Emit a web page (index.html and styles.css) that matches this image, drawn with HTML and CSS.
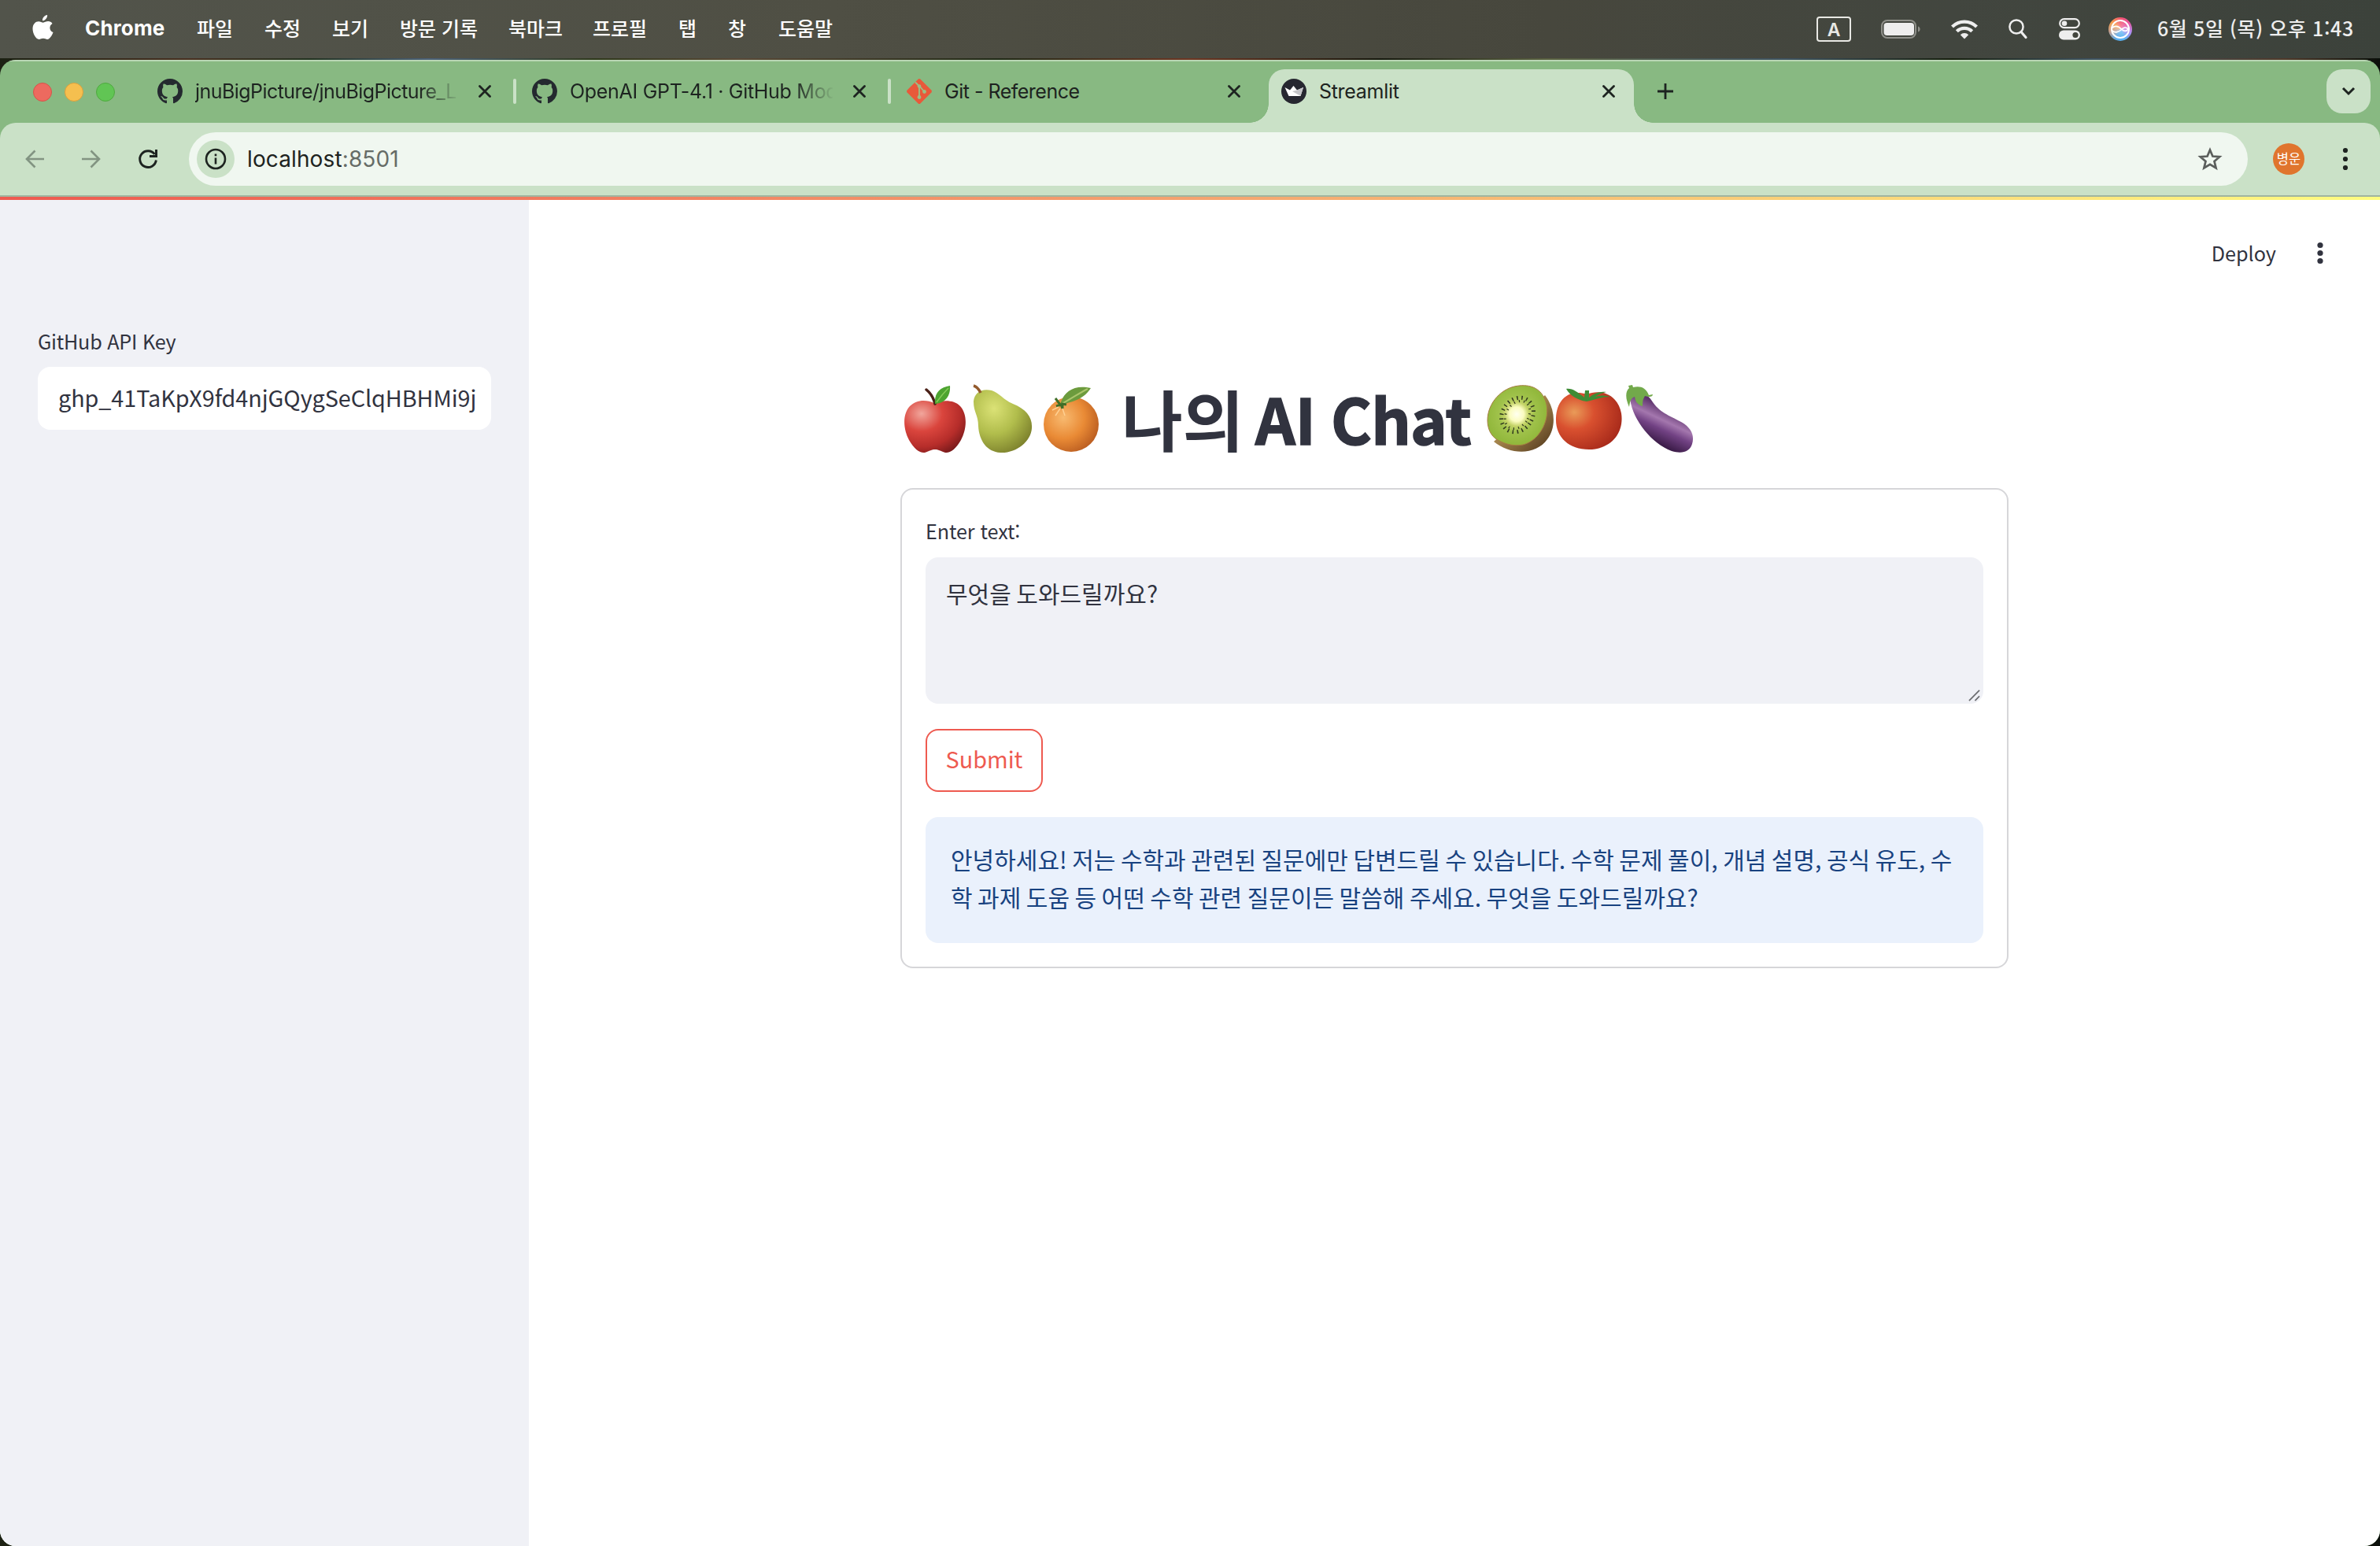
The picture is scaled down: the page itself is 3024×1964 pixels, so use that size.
FILE: index.html
```html
<!DOCTYPE html>
<html lang="ko">
<head>
<meta charset="utf-8">
<title>Streamlit</title>
<link rel="stylesheet" href="styles.css">
</head>
<body>
<svg class="defs" width="0" height="0" aria-hidden="true">
  <defs>
    <symbol id="github" viewBox="0 0 16 16"><path fill="#24292f" d="M8 0C3.58 0 0 3.58 0 8c0 3.54 2.29 6.53 5.47 7.59.4.07.55-.17.55-.38 0-.19-.01-.82-.01-1.49-2.01.37-2.53-.49-2.69-.94-.09-.23-.48-.94-.82-1.13-.28-.15-.68-.52-.01-.53.63-.01 1.08.58 1.23.82.72 1.21 1.87.87 2.33.66.07-.52.28-.87.51-1.07-1.78-.2-3.64-.89-3.64-3.95 0-.87.31-1.59.82-2.15-.08-.2-.36-1.02.08-2.12 0 0 .67-.21 2.2.82.64-.18 1.32-.27 2-.27s1.36.09 2 .27c1.53-1.04 2.2-.82 2.2-.82.44 1.1.16 1.92.08 2.12.51.56.82 1.27.82 2.15 0 3.07-1.87 3.75-3.65 3.95.29.25.54.73.54 1.48 0 1.07-.01 1.93-.01 2.2 0 .21.15.46.55.38A8.01 8.01 0 0 0 16 8c0-4.42-3.58-8-8-8z"/></symbol>
    <symbol id="close" viewBox="0 0 16 16"><path d="M1.500 1.500l13 13M14.500 1.500l-13 13" stroke="#1d2320" stroke-width="2.800" stroke-linecap="round" fill="none"/></symbol>
  </defs>
</svg>
<header class="menubar">
  <svg class="apple-logo" viewBox="0 0 26 32"><path fill="#fff" d="M18.6 0c.3 3.700-2.900 7.300-6.100 7.300C12 3.900 15.300.4 18.600 0zM25 10.900c-4.500 2.700-4 9.200 1 11.100-1.200 3.600-4.300 9-7.200 9-2.200 0-2.900-1.200-5.400-1.200S10 31 8 31C4.200 31 0 23.600 0 17.600 0 11.500 3.800 8.200 7.500 8.200c2.400 0 4.200 1.500 5.900 1.500 1.500 0 3.600-1.600 6.400-1.600 2 0 4 .9 5.200 2.800z"/></svg>
  <nav class="menus">
    <b>Chrome</b><span>파일</span><span>수정</span><span>보기</span><span>방문 기록</span><span>북마크</span><span>프로필</span><span>탭</span><span>창</span><span>도움말</span>
  </nav>
  <div class="status">
    <span class="input-source">A</span>
    <svg class="battery" viewBox="0 0 50 24"><rect x="1" y="1" width="43" height="22" rx="7" fill="none" stroke="#8f908a" stroke-width="2"/><rect x="3.500" y="4" width="38.500" height="16" rx="4" fill="#eee"/><path d="M47 8.500c3.500 1 3.500 6 0 7z" fill="#8f908a"/></svg>
    <svg class="wifi" viewBox="0 0 34 26"><g fill="none" stroke="#eee" stroke-width="4.200"><path d="M1.500 10a22 22 0 0 1 31 0"/><path d="M7.300 15.800a13.800 13.800 0 0 1 19.400 0"/></g><path d="M11.800 20.200a7.400 7.400 0 0 1 10.400 0L17 25.500z" fill="#eee"/></svg>
    <svg class="search" viewBox="0 0 24 26"><circle cx="10" cy="10" r="8.600" fill="none" stroke="#eee" stroke-width="2.500"/><path d="M16 16.500l6 7" stroke="#eee" stroke-width="3.200" stroke-linecap="round"/></svg>
    <svg class="control" viewBox="0 0 28 28"><rect x="1.200" y="1.200" width="24.600" height="11" rx="5.500" fill="none" stroke="#eee" stroke-width="2.200"/><circle cx="7" cy="6.700" r="3.300" fill="#eee"/><rect y="15.500" width="27" height="12" rx="6" fill="#eee"/><circle cx="21" cy="21.500" r="3.600" fill="#42453d"/></svg>
    <span class="siri"><svg viewBox="0 0 30 30"><circle cx="15" cy="15" r="11" fill="none" stroke="#fff" stroke-width="2"/><path d="M4.500 13.500c5-4 9-1.500 12 1.500s6 3.500 8.500 0c-2.500-3-5.500-2.500-8.500.5s-8 5-12 1.500" fill="none" stroke="#fff" stroke-width="1.700"/></svg></span>
    <time>6월 5일 (목) 오후 1:43</time>
  </div>
</header>
<main class="window">
  <div class="tabstrip">
    <div class="lights"><i class="red"></i><i class="yellow"></i><i class="green"></i></div>
    <div class="tab"><svg class="favicon"><use href="#github"/></svg><span class="tab-title fade t1">jnuBigPicture/jnuBigPicture_L</span><svg class="close"><use href="#close"/></svg></div>
    <div class="tab divided"><svg class="favicon"><use href="#github"/></svg><span class="tab-title fade t2">OpenAI GPT-4.1 · GitHub Mod</span><svg class="close"><use href="#close"/></svg></div>
    <div class="tab divided"><svg class="favicon" viewBox="0 0 32 32"><path d="M14.600.600q1.400-1.200 2.800 0l14 14q1.200 1.400 0 2.800l-14 14q-1.400 1.200-2.800 0l-14-14q-1.200-1.400 0-2.800z" fill="#e8593a"/><path d="M11 4.500l5 5v14M16 9l6 7" stroke="#9dbd84" stroke-width="1.900" fill="none"/><g fill="#9dbd84"><circle cx="16" cy="9.500" r="2.300"/><circle cx="16" cy="23.500" r="2.400"/><circle cx="22.500" cy="16.500" r="2.400"/></g></svg><span class="tab-title t3">Git - Reference</span><svg class="close"><use href="#close"/></svg></div>
    <div class="tab active"><svg class="favicon" viewBox="0 0 32 32"><circle cx="16" cy="16" r="16" fill="#262730"/><path d="M4.500 11l6.500 3.500L15.500 9l4.500 5.500 8-3.500-3.500 11h-15z" fill="#fff"/><path d="M14 16l6-1.500L28 11l-3.500 11z" fill="#c4c4c8"/></svg><span class="tab-title t4">Streamlit</span><svg class="close"><use href="#close"/></svg></div>
    <svg class="plus" viewBox="0 0 22 22"><path d="M11 1v20M1 11h20" stroke="#1d2320" stroke-width="2.800"/></svg>
    <div class="tab-search"><svg viewBox="0 0 18 12"><path d="M2 2l7 7 7-7" fill="none" stroke="#1d2320" stroke-width="3"/></svg></div>
  </div>
  <div class="toolbar">
    <svg class="nav" viewBox="0 0 24 24"><path d="M24 12H2M12.500 1.500L2 12l10.500 10.500" fill="none" stroke="#829482" stroke-width="2.600"/></svg>
    <svg class="nav" viewBox="0 0 24 24"><path d="M0 12h22M11.500 1.500L22 12 11.500 22.500" fill="none" stroke="#829482" stroke-width="2.600"/></svg>
    <svg class="nav" viewBox="0 0 24 24"><path d="M20.500 6A10.400 10.400 0 1 0 22.400 13.500" fill="none" stroke="#1d2320" stroke-width="2.900"/><path d="M24 0v10H14V7h7V0z" fill="#1d2320"/></svg>
    <div class="omnibox">
      <span class="info"><svg viewBox="0 0 28 28"><circle cx="14" cy="14" r="12" fill="none" stroke="#1d2320" stroke-width="2.600"/><path d="M14 12.500v8M14 7.500v2.800" stroke="#1d2320" stroke-width="2.600"/></svg></span>
      <span class="url">localhost<em>:8501</em></span>
      <svg class="star" viewBox="0 0 32 30"><path d="M16 3.500l3.400 8 8.800.7-6.700 5.700 2.100 8.500-7.600-4.600-7.600 4.600 2.100-8.500-6.700-5.700 8.800-.7z" fill="none" stroke="#5b5e5c" stroke-width="2.700"/></svg>
    </div>
    <span class="avatar">병운</span>
    <svg class="dots" viewBox="0 0 8 30"><g fill="#1d2320"><circle cx="4" cy="4" r="3.100"/><circle cx="4" cy="15" r="3.100"/><circle cx="4" cy="26" r="3.100"/></g></svg>
  </div>
  <div class="decoration"></div>
  <div class="app">
    <aside>
      <label class="label api">GitHub API Key</label>
      <div class="key">ghp_41TaKpX9fd4njGQygSeClqHBHMi9j</div>
    </aside>
    <section class="page">
      <div class="page-head"><span class="deploy">Deploy</span><svg class="dots" viewBox="0 0 8 30"><g fill="#31333f"><circle cx="4" cy="4.500" r="3.600"/><circle cx="4" cy="14.500" r="3.600"/><circle cx="4" cy="24.500" r="3.600"/></g></svg></div>
      <div class="block">
        <h1>
          <svg class="emoji" viewBox="0 0 88 88"><defs><radialGradient id="ap" cx=".28" cy=".25" r=".85"><stop offset="0" stop-color="#f1a69c"/><stop offset=".4" stop-color="#da453d"/><stop offset=".75" stop-color="#b62d2a"/><stop offset="1" stop-color="#7c1b1c"/></radialGradient></defs><path d="M43 24C32 19 20 20 12 28 2 39 4 58 11 71c6 11 14 17 20 16 6-2 9-4 13-4s7 2 13 4c6 1 14-5 20-16 7-13 9-32-1-43-8-8-21-8-33-4z" fill="url(#ap)"/><path d="M33 7c5 4 9 10 11 18" stroke="#4a2017" stroke-width="3.500" fill="none" stroke-linecap="round"/><path d="M44 25C43 11 50 4 63 2c1 12-5 22-19 23z" fill="#4da430"/><path d="M46 23C51 16 56 10 61 5" stroke="#86cc58" stroke-width="1.500" fill="none"/></svg>
          <svg class="emoji" viewBox="0 0 88 88"><defs><radialGradient id="pe" cx=".35" cy=".3" r=".8"><stop offset="0" stop-color="#dbe276"/><stop offset=".5" stop-color="#b1bd4c"/><stop offset="1" stop-color="#777b29"/></radialGradient></defs><path d="M5 22C6 10 16 5 28 8c11 4 15 12 27 17 17 7 25 17 24 31-1 17-20 32-40 31-17-1-27-15-28-34C11 39 5 36 5 22z" fill="url(#pe)"/><path d="M5 2c4 1 7 5 9 9" stroke="#935a2c" stroke-width="3.600" fill="none"/></svg>
          <svg class="emoji" viewBox="0 0 88 88"><defs><radialGradient id="or" cx=".36" cy=".38" r=".7"><stop offset="0" stop-color="#f8ba70"/><stop offset=".55" stop-color="#e98a35"/><stop offset="1" stop-color="#b95c20"/></radialGradient></defs><circle cx="41" cy="51" r="35" fill="url(#or)"/><path d="M27 26C31 10 44 0 66 5 58 17 48 22 27 26z" fill="#6c9b3d"/><path d="M29 25C42 18 52 11 62 6" stroke="#abc66c" stroke-width="2" fill="none"/><path d="M21 18l6 8M22 28l6-2 2 5 0-6 5 1" stroke="#3f6e28" stroke-width="3" fill="none"/><path d="M27 31l-6 9M30 31l3 9M25 29l-8 4" stroke="#ffd092" stroke-width="1.500"/></svg>
          <span class="ko">나의</span><span class="ai">AI</span><span class="chat">Chat</span>
          <svg class="emoji" viewBox="0 0 88 88"><defs><linearGradient id="kb" x1="0" y1="0" x2="1" y2="1"><stop offset=".4" stop-color="#aa8a50"/><stop offset="1" stop-color="#4d3319"/></linearGradient><radialGradient id="kg" cx=".49" cy=".48"><stop offset="0" stop-color="#fffff0"/><stop offset=".24" stop-color="#fbfcc0"/><stop offset=".4" stop-color="#c5d468"/><stop offset=".6" stop-color="#a0c24b"/><stop offset="1" stop-color="#92b83c"/></radialGradient></defs><path d="M75 14c14 18 14 42 3 56-14 20-46 21-68 3z" fill="url(#kb)"/><path d="M2 46C2 24 20 4 42 2c18-2 31 6 35 24 4 22-10 46-30 51-11 2-21 0-32-6C6 66 2 56 2 46z" fill="url(#kg)" stroke="#a67d42"/><ellipse cx="40" cy="39" rx="19" ry="23" transform="rotate(35 40 39)" fill="none" stroke="#31391f" stroke-width="5" stroke-dasharray="1.500 4.500"/><ellipse cx="40" cy="39" rx="14" ry="19" transform="rotate(35 40 39)" fill="none" stroke="#31391f" stroke-width="3" stroke-dasharray="1.200 5"/></svg>
          <svg class="emoji" viewBox="0 0 88 88"><defs><radialGradient id="to" cx=".28" cy=".35" r=".75"><stop offset="0" stop-color="#e99b58"/><stop offset=".4" stop-color="#d9502f"/><stop offset="1" stop-color="#a92b1b"/></radialGradient></defs><path d="M40 13C60 5 80 15 84 37c4 26-14 46-41 46C17 83 0 67 1 43 2 18 19 6 40 13z" fill="url(#to)"/><path d="M14 6c8-1 14 4 23 11l1-9h5v9c7-6 14-8 22-7-8 2-11 4-14 6 7-2 13-2 19 0-11 0-20 4-30 6-10-1-21-7-26-16z" fill="#3e8c35"/></svg>
          <svg class="emoji" viewBox="0 0 88 88"><defs><linearGradient id="eg" x1=".65" y1=".2" x2=".35" y2=".8"><stop offset=".1" stop-color="#5c316b"/><stop offset=".43" stop-color="#a477ae"/><stop offset=".65" stop-color="#724284"/><stop offset="1" stop-color="#3d1d4a"/></linearGradient></defs><path d="M7 18C14 8 26 9 34 20c11 17 22 19 38 28 14 8 17 18 14 28-3 10-13 13-26 9C34 75 10 45 7 18z" fill="url(#eg)"/><path d="M5 2l5-1 1 3c9-2 16 0 20 10l5-1c0 3-4 4-10 2-3 5-3 8-3 13-7-2-9-6-10-12-4 1-6 5-7 13-5-11-5-20 0-24z" fill="#72a94b"/></svg>
        </h1>
        <form class="card">
          <label class="label enter">Enter text:</label>
          <div class="textarea">무엇을 도와드릴까요?<svg class="grip" viewBox="0 0 16 16"><path d="M1 15L15 1M9 15l6-6" stroke="#6b6c70" stroke-width="1.800"/></svg></div>
          <div class="submit">Submit</div>
          <div class="answer"><span>안녕하세요! 저는 수학과 관련된 질문에만 답변드릴 수 있습니다. 수학 문제 풀이, 개념 설명, 공식 유도, 수</span><br><span>학 과제 도움 등 어떤 수학 관련 질문이든 말씀해 주세요. 무엇을 도와드릴까요?</span></div>
        </form>
      </div>
    </section>
  </div>
</main>
</body>
</html>
```
FILE: styles.css
```css
* { box-sizing: border-box; }
body {
  margin: 0; width: 3024px; height: 1964px; overflow: hidden;
  display: flex; flex-direction: column;
  font-family: "Noto Sans CJK KR", sans-serif; color: #31333f;
  background: linear-gradient(90deg, #1c2113, #4a3021 8%, #233321 13%, #4c6179 18%, #30391c 25%, #5b4937 31%, #222b18 42%, #6f3623 50%, #17190f 58%, #5a6040 65%, #3f5362 75%, #18200f 82%, #3f5362 88%, #51392a 96%, #0a0f0a);
}
svg { display: block; flex: none; overflow: visible; }
.defs { position: absolute; }

.menubar {
  height: 74px; flex: none; display: flex; align-items: center;
  padding: 0 33px 0 41px; color: #fff;
  background: linear-gradient(90deg, #52544b, #4f4f44 35%, #47473d 65%, #42463f 82%, #3c423b);
}
.apple-logo { width: 27px; height: 32px; margin-top: -5px; }
.menus {
  margin-left: 40px; display: grid; white-space: nowrap;
  grid-template-columns: 142px 86px 86px 86px 138px 107px 109px 63px 64px 70px;
  font-size: 25px; font-weight: 500; line-height: 36px; margin-top: -4px;
}
.menus b { font-family: Inter, sans-serif; font-size: 26px; font-weight: 700; letter-spacing: .15px; padding-top: 1px; }
.status { margin-left: auto; display: flex; align-items: center; }
.input-source {
  width: 44px; height: 32px; border: 2px solid #e8e8e4; border-radius: 4px; color: #e8e8e4;
  font: 600 23px/31px Inter, sans-serif; text-align: center;
}
.battery { width: 50px; height: 24px; margin-left: 38px; }
.wifi { width: 34px; height: 26px; margin-left: 39px; }
.search { width: 24px; height: 26px; margin-left: 39px; }
.control { width: 28px; height: 28px; margin-left: 40px; }
.siri {
  width: 30px; height: 30px; margin-left: 35px; border-radius: 50%;
  background: radial-gradient(circle, #fff6 0, #fff0 60%), conic-gradient(#f4566f, #e8539b, #b98af0, #58b4f2, #59a9ea, #c5a090, #f5a04c, #f4566f);
}
.menubar time { width: 250px; margin-left: 32px; margin-top: -4px; font-size: 25px; font-weight: 500; white-space: nowrap; color: #eee; letter-spacing: .6px; }

.window {
  margin-top: 2px; height: 1888px; display: flex; flex-direction: column; overflow: hidden;
  border-radius: 20px; background: #88b982;
}
.tabstrip { height: 80px; flex: none; display: flex; align-items: flex-start; box-shadow: inset 0 2px #b9d6b4; }
.lights { display: flex; gap: 16px; padding: 29px 0 0 42px; width: 184px; }
.lights i { width: 24px; height: 24px; border-radius: 50%; }
.red { background: #ed6a5f; border: 1px solid #d75349; }
.yellow { background: #f5bf4f; border: 1px solid #daa03d; }
.green { background: #61c554; border: 1px solid #4fa93f; }
.tab {
  position: relative; width: 476px; height: 68px; margin-top: 12px; padding: 0 20px 12px 16px;
  display: flex; align-items: center; font: 400 25px/32px Inter, sans-serif; color: #1d2320;
}
.tab.divided::before { content: ""; position: absolute; left: -8px; top: 12px; width: 4px; height: 32px; border-radius: 2px; background: #cae1c7; }
.tab.active { width: 464px; background: #cae1c7; border-radius: 20px 20px 0 0; padding-right: 24px; }
.tab.active::before, .tab.active::after { content: ""; position: absolute; bottom: 0; width: 24px; height: 24px; }
.tab.active::before { left: -24px; background: radial-gradient(circle at 0 0, transparent 23.500px, #cae1c7 24px); }
.tab.active::after { right: -24px; background: radial-gradient(circle at 100% 0, transparent 23.500px, #cae1c7 24px); }
.favicon { width: 32px; height: 32px; margin-right: 16px; }
.tab-title { width: 334px; height: 33px; overflow: hidden; white-space: nowrap; }
.t1 { letter-spacing: -.55px; }
.t2 { letter-spacing: -.3px; }
.t3 { letter-spacing: -.5px; }
.t4 { letter-spacing: -.3px; }
.fade { -webkit-mask-image: linear-gradient(90deg, #000 285px, transparent 336px); mask-image: linear-gradient(90deg, #000 285px, transparent 336px); }
.close { width: 16px; height: 16px; margin-left: 26px; }
.plus { width: 22px; height: 22px; margin: 29px 0 0 29px; }
.tab-search { margin: 12px 12px 0 auto; width: 56px; height: 56px; border-radius: 20px; background: #cae1c7; display: grid; place-items: center; }
.tab-search svg { width: 18px; height: 12px; }

.toolbar {
  height: 94px; flex: none; display: flex; align-items: center; padding: 0 40px 0 32px;
  background: #cae1c7; border-bottom: 2px solid #a0b59f; border-radius: 20px 20px 0 0;
}
.nav { width: 24px; height: 24px; margin-right: 48px; }
.omnibox { width: 2616px; height: 68px; margin-left: -8px; border-radius: 34px; background: #f0f7f0; display: flex; align-items: center; padding: 0 32px 0 10px; }
.info { width: 48px; height: 48px; border-radius: 50%; background: #cae1c7; display: grid; place-items: center; }
.info svg { width: 28px; height: 28px; }
.url { margin-left: 16px; font: 400 28px/40px Inter, sans-serif; letter-spacing: .12px; color: #1d2320; }
.url em { font-style: normal; color: #666c67; }
.star { width: 32px; height: 30px; margin-left: auto; }
.avatar { width: 40px; height: 40px; margin: 0 48px 0 32px; border-radius: 50%; background: #e0752d; color: #fff; font-size: 16.500px; line-height: 38px; text-align: center; }
.dots { width: 8px; height: 30px; }

.decoration { height: 4px; flex: none; background: linear-gradient(90deg, #ee5a50, #f4a36f 50%, #fffd80); }
.app { flex: 1; display: flex; background: #fff; }
aside { width: 672px; padding: 160px 48px 0; background: #f0f1f6; }
.label { display: block; height: 40px; font-size: 25.200px; line-height: 37px; }
.api { letter-spacing: -.25px; line-height: 38px; }
.enter { letter-spacing: -.1px; }
.key { margin-top: 12px; height: 80px; padding-left: 26px; border-radius: 16px; background: #fff; font-size: 28.800px; line-height: 78px; letter-spacing: -.08px; white-space: nowrap; }
.page { flex: 1; }
.page-head { height: 136px; display: flex; justify-content: flex-end; align-items: center; padding: 0 72px 0 0; font-size: 25.200px; line-height: 40px; }
.deploy { margin-right: 52px; padding-bottom: 3px; }
.block { width: 1408px; margin-left: 472px; }
h1 { margin: 0; height: 230px; padding-top: 98px; display: flex; font-weight: 700; font-size: 79.200px; line-height: 88px; white-space: nowrap; }
.emoji { width: 88px; height: 88px; }
.ko { width: 170px; margin-left: 17px; font-size: 84.500px; line-height: 84px; }
.ai, .chat { -webkit-text-stroke: 1.600px #31333f; line-height: 86px; }
.ai { width: 96px; }
.chat { width: 197px; letter-spacing: -.8px; }
.card { height: 610px; border: 2px solid #d6d6d9; border-radius: 16px; padding: 34px 30px 0; }
.textarea { position: relative; margin-top: 12px; height: 186px; border-radius: 16px; background: #f0f1f6; padding: 21px 26px; font-size: 30px; line-height: 48px; word-spacing: -1.900px; }
.grip { position: absolute; right: 4px; bottom: 3px; width: 15px; height: 15px; }
.submit { margin-top: 32px; width: 149px; height: 80px; border: 2px solid #ee5a50; border-radius: 16px; color: #ee5a50; text-align: center; font-size: 28.800px; line-height: 72px; }
.answer { margin-top: 32px; height: 160px; padding: 29px 32px; border-radius: 16px; background: #eaf1fc; color: #184280; font-size: 30px; line-height: 48px; white-space: nowrap; word-spacing: -1.900px; }
```
